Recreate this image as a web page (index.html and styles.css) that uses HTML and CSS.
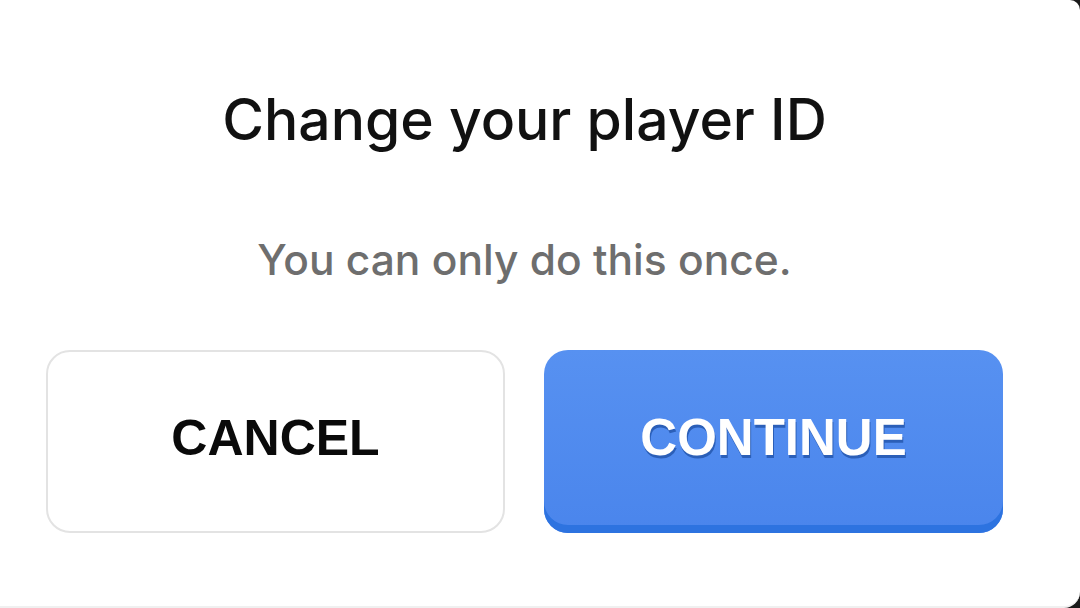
FILE: index.html
```html
<!DOCTYPE html>
<html>
<head>
<meta charset="utf-8">
<link rel="stylesheet" href="styles.css">
</head>
<body>
<div class="dialog">
  <h1 class="title">Change your player ID</h1>
  <p class="subtitle">You can only do this once.</p>
  <div class="actions">
    <button class="btn btn-cancel">CANCEL</button>
    <button class="btn btn-continue">CONTINUE</button>
  </div>
</div>
</body>
</html>
```

FILE: styles.css
```css
html, body {
  margin: 0;
  padding: 0;
  width: 1080px;
  height: 608px;
  overflow: hidden;
  background: #1a1a1a;
}
.dialog {
  box-sizing: border-box;
  width: 1080px;
  height: 608px;
  background: #ffffff;
  border-top-right-radius: 10px;
  border-bottom-right-radius: 16px;
  border-bottom: 2px solid #f0f0f0;
  padding: 85px 77px 0 46px;
  display: flex;
  flex-direction: column;
  align-items: center;
  font-family: Inter, "Noto Sans", sans-serif;
}
.title {
  margin: 0;
  font-size: 57px;
  font-weight: 500;
  color: #111111;
  line-height: 70px;
}
.subtitle {
  margin: 80px 0 0 0;
  font-size: 42.5px;
  font-weight: 500;
  color: #6e6e6e;
  line-height: 50px;
}
.actions {
  margin-top: 65px;
  width: 100%;
  display: flex;
  gap: 39px;
}
.btn {
  flex: none;
  width: 459px;
  height: 183px;
  border-radius: 24px;
  font-family: "Liberation Sans", Arial, sans-serif;
  font-weight: 700;
  font-size: 50px;
  cursor: pointer;
}
.btn-cancel {
  background: #ffffff;
  border: 2px solid #e3e3e3;
  color: #0a0a0a;
  padding: 0 0 8px 0;
}
.btn-continue {
  border: none;
  color: #ffffff;
  font-size: 51px;
  background: linear-gradient(#5791f1, #4a85ec);
  box-shadow: inset 0 -8px 0 #2d73e0;
  text-shadow: 1px 3px 0 #2b5fb8;
  padding: 0 0 8px 0;
}
```
